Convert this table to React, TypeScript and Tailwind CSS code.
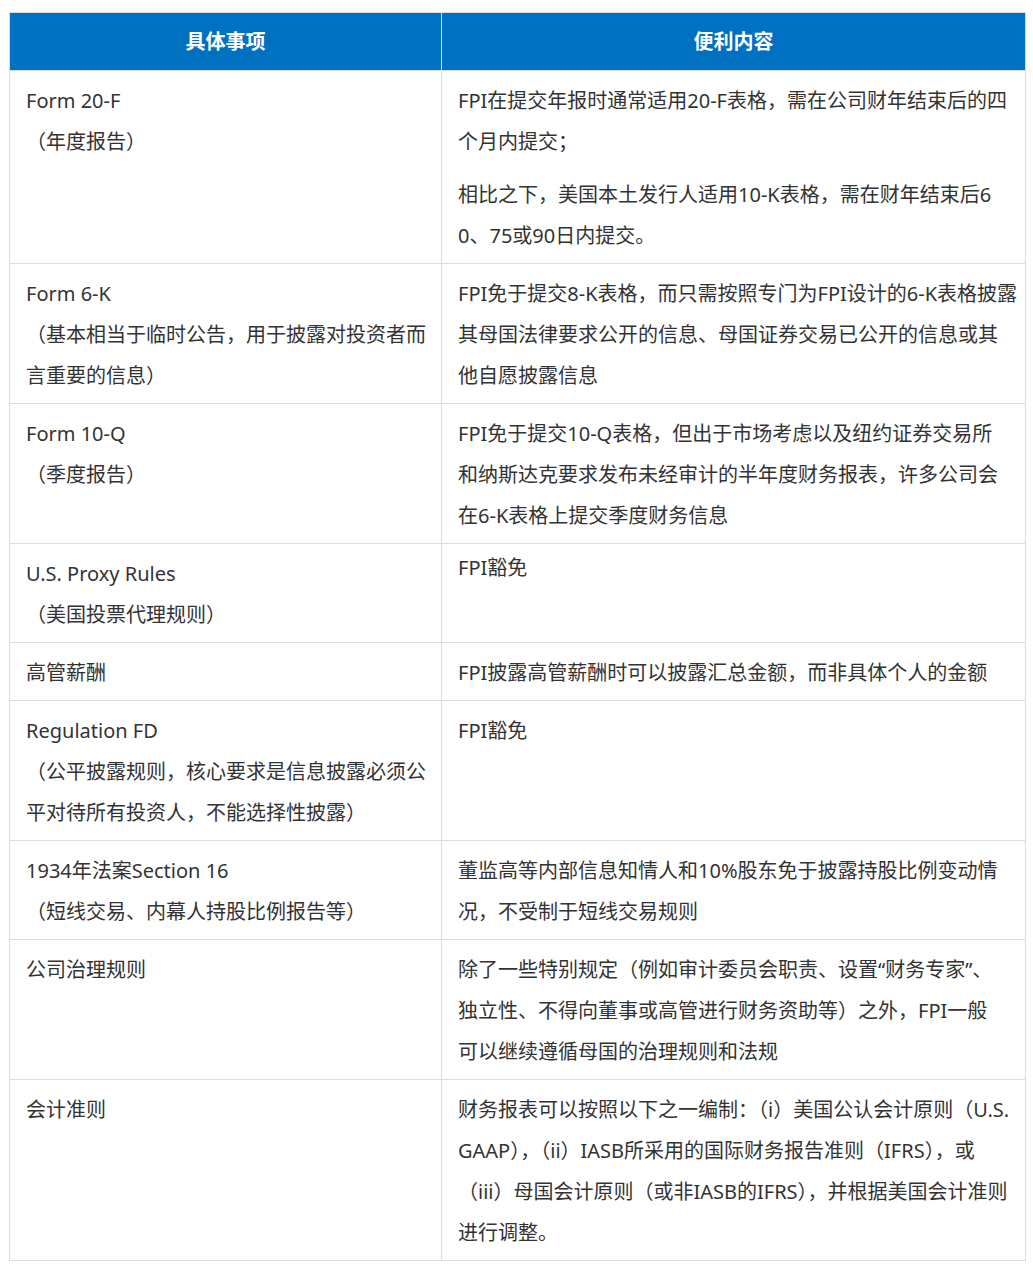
import React from 'react'

interface Row {
  left: string[]
  right: string[][]
  rightPad?: string
}

const rows: Row[] = [
  {
    left: ['Form 20-F', '（年度报告）'],
    right: [
      ['FPI在提交年报时通常适用20-F表格，需在公司财年结束后的四', '个月内提交；'],
      ['相比之下，美国本土发行人适用10-K表格，需在财年结束后6', '0、75或90日内提交。'],
    ],
  },
  {
    left: ['Form 6-K', '（基本相当于临时公告，用于披露对投资者而', '言重要的信息）'],
    right: [
      [
        'FPI免于提交8-K表格，而只需按照专门为FPI设计的6-K表格披露',
        '其母国法律要求公开的信息、母国证券交易已公开的信息或其',
        '他自愿披露信息',
      ],
    ],
  },
  {
    left: ['Form 10-Q', '（季度报告）'],
    right: [
      [
        'FPI免于提交10-Q表格，但出于市场考虑以及纽约证券交易所',
        '和纳斯达克要求发布未经审计的半年度财务报表，许多公司会',
        '在6-K表格上提交季度财务信息',
      ],
    ],
  },
  {
    left: ['U.S. Proxy Rules', '（美国投票代理规则）'],
    right: [['FPI豁免']],
    rightPad: 'pt-[3px]',
  },
  {
    left: ['高管薪酬'],
    right: [['FPI披露高管薪酬时可以披露汇总金额，而非具体个人的金额']],
  },
  {
    left: ['Regulation FD', '（公平披露规则，核心要求是信息披露必须公', '平对待所有投资人，不能选择性披露）'],
    right: [['FPI豁免']],
  },
  {
    left: ['1934年法案Section 16', '（短线交易、内幕人持股比例报告等）'],
    right: [['董监高等内部信息知情人和10%股东免于披露持股比例变动情', '况，不受制于短线交易规则']],
  },
  {
    left: ['公司治理规则'],
    right: [
      [
        '除了一些特别规定（例如审计委员会职责、设置“财务专家”、',
        '独立性、不得向董事或高管进行财务资助等）之外，FPI一般',
        '可以继续遵循母国的治理规则和法规',
      ],
    ],
  },
  {
    left: ['会计准则'],
    right: [
      [
        '财务报表可以按照以下之一编制：（i）美国公认会计原则（U.S.',
        'GAAP），（ii）IASB所采用的国际财务报告准则（IFRS），或',
        '（iii）母国会计原则（或非IASB的IFRS），并根据美国会计准则',
        '进行调整。',
      ],
    ],
  },
]

function Lines({ lines }: { lines: string[] }) {
  return (
    <>
      {lines.map((l, i) => (
        <div key={i} className="whitespace-nowrap">
          {l}
        </div>
      ))}
    </>
  )
}

export default function App() {
  return (
    <div
      className="min-h-[1270px] bg-white pt-[12px] pl-[9px] text-[20px] text-[#333]"
      style={{ fontFamily: '"Noto Sans", "Noto Sans CJK SC", sans-serif' }}
    >
      <table className="w-[1016px] table-fixed border-collapse border border-[#ddd]">
        <colgroup>
          <col className="w-[432px]" />
          <col className="w-[584px]" />
        </colgroup>
        <thead>
          <tr className="h-[58px] bg-[#0070c0] text-white">
            <th className="border border-[#ddd] text-center align-middle font-bold">具体事项</th>
            <th className="border border-[#ddd] text-center align-middle font-bold">便利内容</th>
          </tr>
        </thead>
        <tbody>
          {rows.map((row, i) => (
            <tr key={i}>
              <td className="border border-[#ddd] px-4 pt-[9px] pb-[7px] align-top leading-[41px]">
                <Lines lines={row.left} />
              </td>
              <td
                className={`border border-[#ddd] px-4 pb-[7px] align-top leading-[41px] ${row.rightPad ?? 'pt-[9px]'}`}
              >
                <div className="flex flex-col gap-[12px]">
                  {row.right.map((p, j) => (
                    <div key={j}>
                      <Lines lines={p} />
                    </div>
                  ))}
                </div>
              </td>
            </tr>
          ))}
        </tbody>
      </table>
    </div>
  )
}
